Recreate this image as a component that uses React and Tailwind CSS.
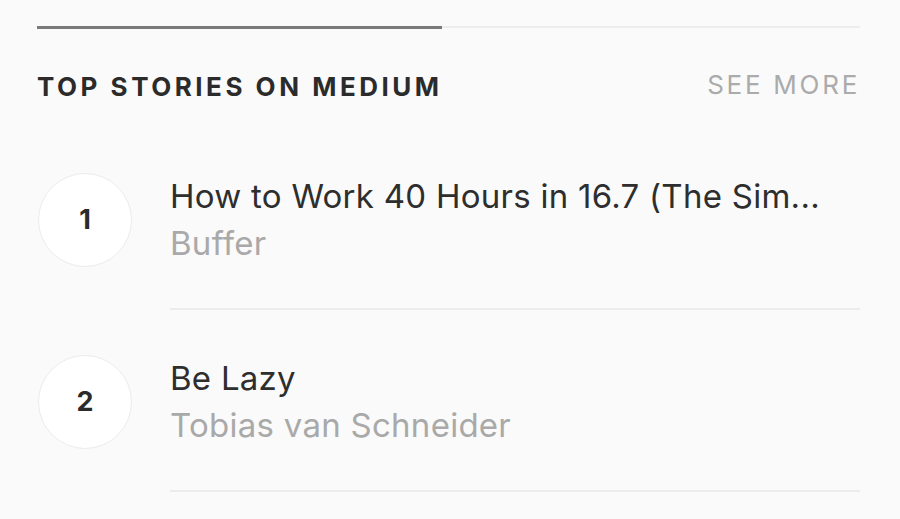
import React from "react";

const stories = [
  { n: 1, title: "How to Work 40 Hours in 16.7 (The Sim...", author: "Buffer" },
  { n: 2, title: "Be Lazy", author: "Tobias van Schneider" },
];

export default function App() {
  return (
    <div
      className="w-[900px] h-[519px] overflow-hidden bg-[#fafafa] pl-[37px] pr-[40px] pt-[26px]"
      style={{ fontFamily: "Inter, 'Liberation Sans', sans-serif" }}
    >
      <div className="flex items-start">
        <div className="w-[405px] h-[3px] bg-[#7a7a7a]" />
        <div className="flex-1 h-[2px] bg-[#ededed]" />
      </div>
      <div className="mt-[42px] flex items-center justify-between h-[32px]">
        <div className="text-[26px] leading-[32px] font-bold tracking-[0.135em] text-[#2b2b2b]">
          TOP STORIES ON MEDIUM
        </div>
        <div className="text-[26px] leading-[32px] tracking-[0.105em] text-[#ababab] -mt-[4px]">
          SEE MORE
        </div>
      </div>
      <div className="mt-[70px]">
        {stories.map((s, i) => (
          <div key={s.n} className={i > 0 ? "mt-[45px]" : ""}>
            <div className="flex items-center">
              <div className="ml-px w-[94px] h-[94px] rounded-full bg-white border border-[#ececec] flex items-center justify-center text-[27px] font-bold text-[#2b2b2b]">
                {s.n}
              </div>
              <div className="ml-[38px] flex flex-col">
                <div className="text-[33px] leading-[47px] tracking-[0.008em] text-[#2e2e2e] whitespace-nowrap">
                  {s.title}
                </div>
                <div className="text-[33px] leading-[47px] tracking-[0.008em] text-[#a9a9a9] whitespace-nowrap">
                  {s.author}
                </div>
              </div>
            </div>
            <div className="mt-[41px] ml-[133px] h-[2px] bg-[#ececec]" />
          </div>
        ))}
      </div>
    </div>
  );
}
